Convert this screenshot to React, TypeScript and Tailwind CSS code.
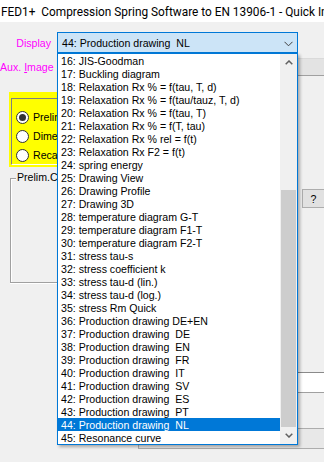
import React from "react";

const items: string[] = [
  "16: JIS-Goodman",
  "17: Buckling diagram",
  "18: Relaxation Rx % = f(tau, T, d)",
  "19: Relaxation Rx % = f(tau/tauz, T, d)",
  "20: Relaxation Rx % = f(tau, T)",
  "21: Relaxation Rx % = f(T, tau)",
  "22: Relaxation Rx % rel = f(t)",
  "23: Relaxation Rx F2 = f(t)",
  "24: spring energy",
  "25: Drawing View",
  "26: Drawing Profile",
  "27: Drawing 3D",
  "28: temperature diagram G-T",
  "29: temperature diagram F1-T",
  "30: temperature diagram F2-T",
  "31: stress tau-s",
  "32: stress coefficient k",
  "33: stress tau-d (lin.)",
  "34: stress tau-d (log.)",
  "35: stress Rm Quick",
  "36: Production drawing DE+EN",
  "37: Production drawing  DE",
  "38: Production drawing  EN",
  "39: Production drawing  FR",
  "40: Production drawing  IT",
  "41: Production drawing  SV",
  "42: Production drawing  ES",
  "43: Production drawing  PT",
  "44: Production drawing  NL",
  "45: Resonance curve",
];

const sans = "font-['Liberation_Sans',Arial,sans-serif] text-[10.6px]";

function Radio({ checked, label }: { checked?: boolean; label: string }) {
  return (
    <div className="flex h-[19px] items-center whitespace-nowrap">
      <div className="flex h-[13px] w-[13px] shrink-0 items-center justify-center rounded-full border border-[#333333] bg-white">
        {checked && <div className="h-[7px] w-[7px] rounded-full bg-[#333333]" />}
      </div>
      <span className="ml-[4px] text-black">{label}</span>
    </div>
  );
}

export default function App() {
  return (
    <div className={`relative flex h-[462px] w-[324px] flex-col overflow-hidden bg-[#f0f0f0] ${sans}`}>
      {/* Title bar */}
      <div className="h-[22px] shrink-0 overflow-hidden whitespace-pre bg-white pl-[1px] pt-[2px] font-['Roboto',sans-serif] text-[11.85px] leading-[20px] text-black">
        FED1+  Compression Spring Software to EN 13906-1 - Quick Input
      </div>

      {/* Main body */}
      <div className="flex">
        {/* Left column */}
        <div className="flex w-[298px] shrink-0 flex-col">
          {/* Display row */}
          <div className="mt-[10px] flex h-[21px]">
            <div className="h-[21px] w-[51px] pt-[2px] text-right leading-[19px] text-[#ff00ff]">Display</div>
            <div className="ml-[6px] flex h-[21px] w-[241px] items-start justify-between border border-[#0078d7] bg-[#cce4f7]">
              <span className="whitespace-pre pl-[4px] pt-[2px] leading-[17px] text-black">44: Production drawing  NL</span>
              <svg width="9" height="6" viewBox="0 0 9 6" className="mr-[4px] mt-[8px]">
                <path d="M0.5 0.8 L4.5 4.8 L8.5 0.8" fill="none" stroke="#404040" strokeWidth="1" />
              </svg>
            </div>
          </div>

          {/* Aux. Image row */}
          <div className="mt-[7px] flex h-[14px]">
            <div className="w-[52px] whitespace-nowrap text-right leading-[14px] text-[#ff00ff]">
              Aux. <span className="underline">I</span>mage
            </div>
          </div>

          {/* Yellow radio panel */}
          <div className="ml-[9px] mt-[18px] h-[75px] w-[200px] bg-[#ffff00] pb-[2px] pl-[2px] pt-[6px]">
            <div className="h-full w-full border-b border-l border-t border-b-white border-l-[#808080] border-t-[#808080] pl-[4px] pt-[9px]">
              <Radio checked label="Preliminary calculation" />
              <Radio label="Dimensioning" />
              <Radio label="Recalculation" />
            </div>
          </div>

          {/* Prelim group box */}
          <div className="relative ml-[10px] mt-[11px] h-[105px] w-[270px] border border-[#a0a0a0] shadow-[inset_1px_1px_0_#ffffff,0_1px_0_#ffffff]">
            <span className="absolute left-[5px] top-[-8px] whitespace-nowrap bg-[#f0f0f0] px-[1px] leading-[13px] text-black">
              Prelim.Computation
            </span>
          </div>
        </div>

        {/* Right column */}
        <div className="flex flex-1 flex-col">
          <div className="mt-[36px] h-[18px] border-b border-t border-b-[#a0a0a0] border-t-[#dadada] bg-[#e3e3e3]" />
          <div className="ml-[4px] mt-[113px] flex h-[19px] w-[23px] items-center justify-center border border-[#adadad] bg-[#e1e1e1] leading-[12px] text-black">
            ?
          </div>
          <div className="mt-[164px] h-[21px] border-b border-t border-b-[#a0a0a0] border-t-[#8a8a8a] bg-white" />
        </div>
      </div>

      {/* Bottom band */}
      <div className="ml-[138px] mt-[35px] h-[21px] border-b border-l border-t border-[#adadad] bg-[#e8e8e8]" />

      {/* Open dropdown list */}
      <div className="absolute left-[57px] top-[53px] flex h-[392px] w-[241px] border border-[#0078d7] bg-white shadow-[2px_2px_3px_rgba(0,0,0,0.3)]">
        <div className="flex w-[222px] flex-col">
          {items.map((t) => {
            const sel = t.startsWith("44:");
            return (
              <div
                key={t}
                className={`h-[13px] whitespace-pre pl-[3px] pt-[2px] leading-[11px] ${sel ? "bg-[#0078d7] text-white" : "text-black"}`}
              >
                {t}
              </div>
            );
          })}
        </div>
        <div className="flex w-[17px] flex-col bg-[#f0f0f0]">
          <div className="flex h-[17px] items-center justify-center">
            <svg width="8" height="5" viewBox="0 0 8 5">
              <path d="M0.7 4.3 L4 1 L7.3 4.3" fill="none" stroke="#606060" strokeWidth="1.5" />
            </svg>
          </div>
          <div className="flex flex-1 flex-col justify-end px-[1px]">
            <div className="h-[237px] bg-[#cdcdcd]" />
          </div>
          <div className="flex h-[17px] items-center justify-center">
            <svg width="8" height="5" viewBox="0 0 8 5">
              <path d="M0.7 0.7 L4 4 L7.3 0.7" fill="none" stroke="#606060" strokeWidth="1.5" />
            </svg>
          </div>
        </div>
      </div>
    </div>
  );
}
